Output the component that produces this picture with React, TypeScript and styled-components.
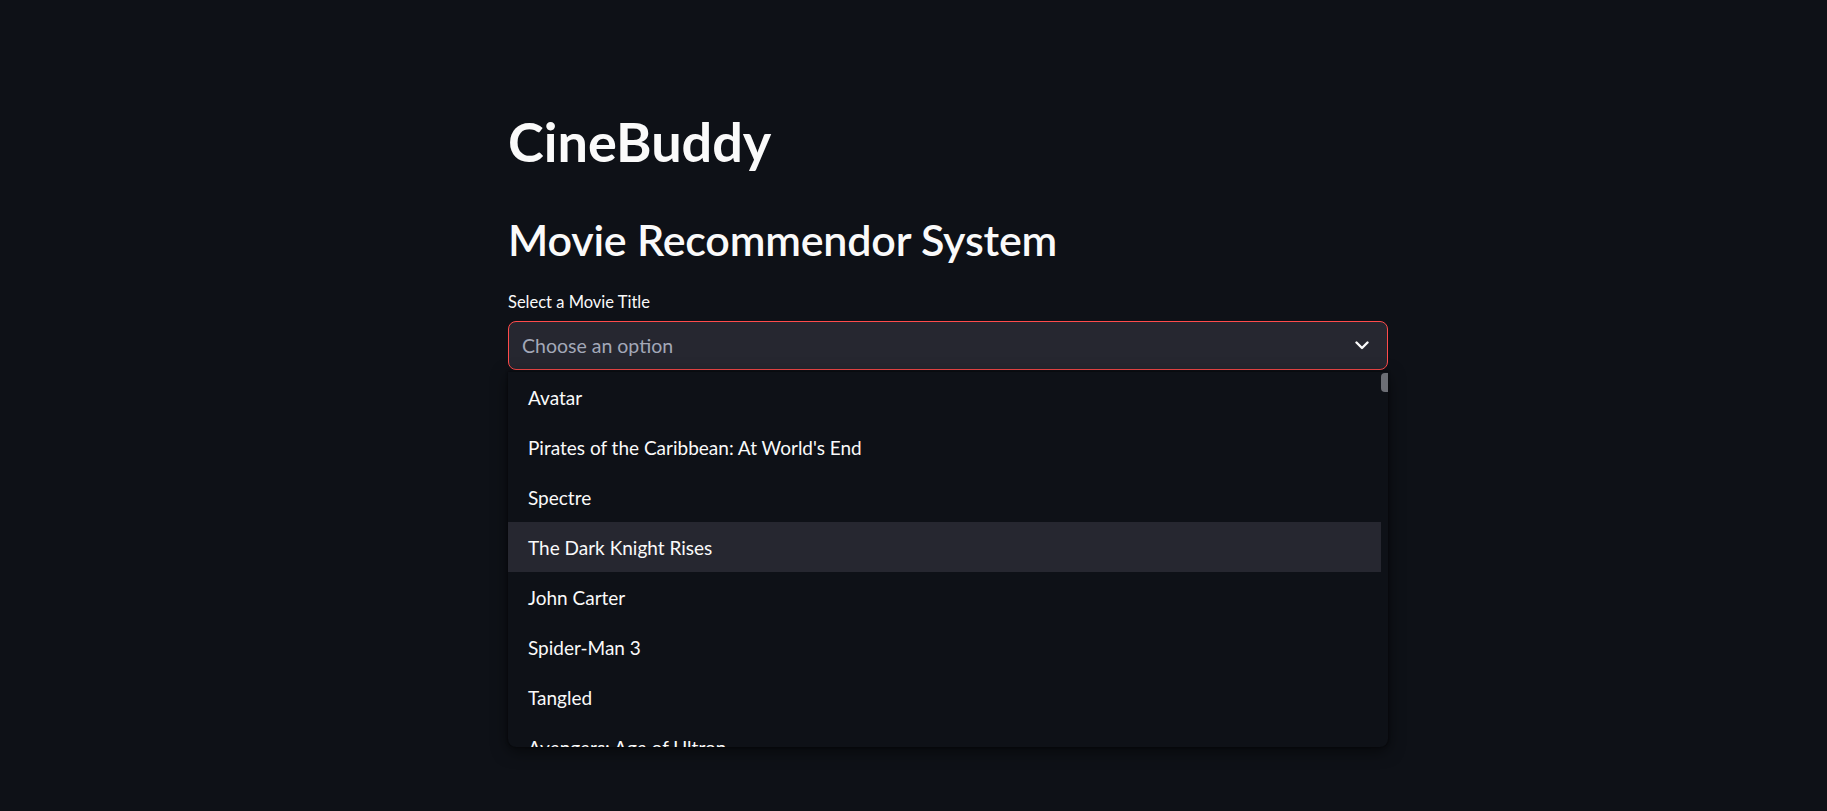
import React from "react";
import styled, { createGlobalStyle } from "styled-components";

const Global = createGlobalStyle`
  html, body { margin: 0; padding: 0; background: #0e1117; }
  body { font-family: Lato, "Noto Sans", sans-serif; color: #fafafa; }
  * { box-sizing: border-box; }
`;

const Page = styled.div`
  width: 1827px;
  height: 811px;
  background: #0e1117;
  overflow: hidden;
`;

const Main = styled.main`
  width: 880px;
  margin-left: 508px;
  padding-top: 102px;
  display: flex;
  flex-direction: column;
`;

const Title = styled.h1`
  margin: 0;
  font-size: 54px;
  font-weight: 700;
  line-height: 80px;
  color: #fafafa;
`;

const Subtitle = styled.h2`
  margin: 28px 0 0;
  font-size: 43px;
  font-weight: 600;
  line-height: 60px;
  letter-spacing: -0.2px;
  color: #fafafa;
`;

const Field = styled.div`
  margin-top: 21px;
  display: flex;
  flex-direction: column;
  position: relative;
`;

const Label = styled.label`
  font-size: 16.5px;
  line-height: 22px;
  color: #fafafa;
  margin-bottom: 8px;
`;

const SelectBox = styled.div`
  height: 49px;
  border: 1px solid #ff4b4b;
  border-radius: 8px;
  background: #262730;
  display: flex;
  align-items: center;
  justify-content: space-between;
  padding: 0 18px 0 13px;
`;

const Placeholder = styled.span`
  font-size: 19.5px;
  color: #a3a8b8;
`;

const Menu = styled.ul`
  position: absolute;
  top: 81px;
  left: 0;
  width: 880px;
  height: 375px;
  margin: 0;
  padding: 0;
  list-style: none;
  background: #0e1117;
  border-radius: 0 0 8px 8px;
  box-shadow: 0 4px 16px rgba(0, 0, 0, 0.55), 0 0 3px rgba(0, 0, 0, 0.6);
  overflow: hidden;
`;

const Option = styled.li<{ $active?: boolean }>`
  height: 50px;
  width: 873px;
  display: flex;
  align-items: center;
  padding-left: 20px;
  font-size: 19px;
  color: #fafafa;
  background: ${(p) => (p.$active ? "#262730" : "transparent")};
`;

const Thumb = styled.div`
  position: absolute;
  top: 1px;
  right: 0;
  width: 7px;
  height: 19px;
  border-radius: 4px 0 0 4px;
  background: #6c6e75;
`;

const movies = [
  "Avatar",
  "Pirates of the Caribbean: At World's End",
  "Spectre",
  "The Dark Knight Rises",
  "John Carter",
  "Spider-Man 3",
  "Tangled",
  "Avengers: Age of Ultron",
];

export default function App() {
  return (
    <Page>
      <Global />
      <Main>
        <Title>CineBuddy</Title>
        <Subtitle>Movie Recommendor System</Subtitle>
        <Field>
          <Label>Select a Movie Title</Label>
          <SelectBox>
            <Placeholder>Choose an option</Placeholder>
            <svg width="14" height="9" viewBox="0 0 14 9">
              <path d="M1.5 1.5 L7 7 L12.5 1.5" fill="none" stroke="#fafafa" strokeWidth="2.4" strokeLinecap="round" strokeLinejoin="round" />
            </svg>
          </SelectBox>
          <Menu>
            <Thumb />
            {movies.map((m) => (
              <Option key={m} $active={m === "The Dark Knight Rises"}>
                {m}
              </Option>
            ))}
          </Menu>
        </Field>
      </Main>
    </Page>
  );
}
